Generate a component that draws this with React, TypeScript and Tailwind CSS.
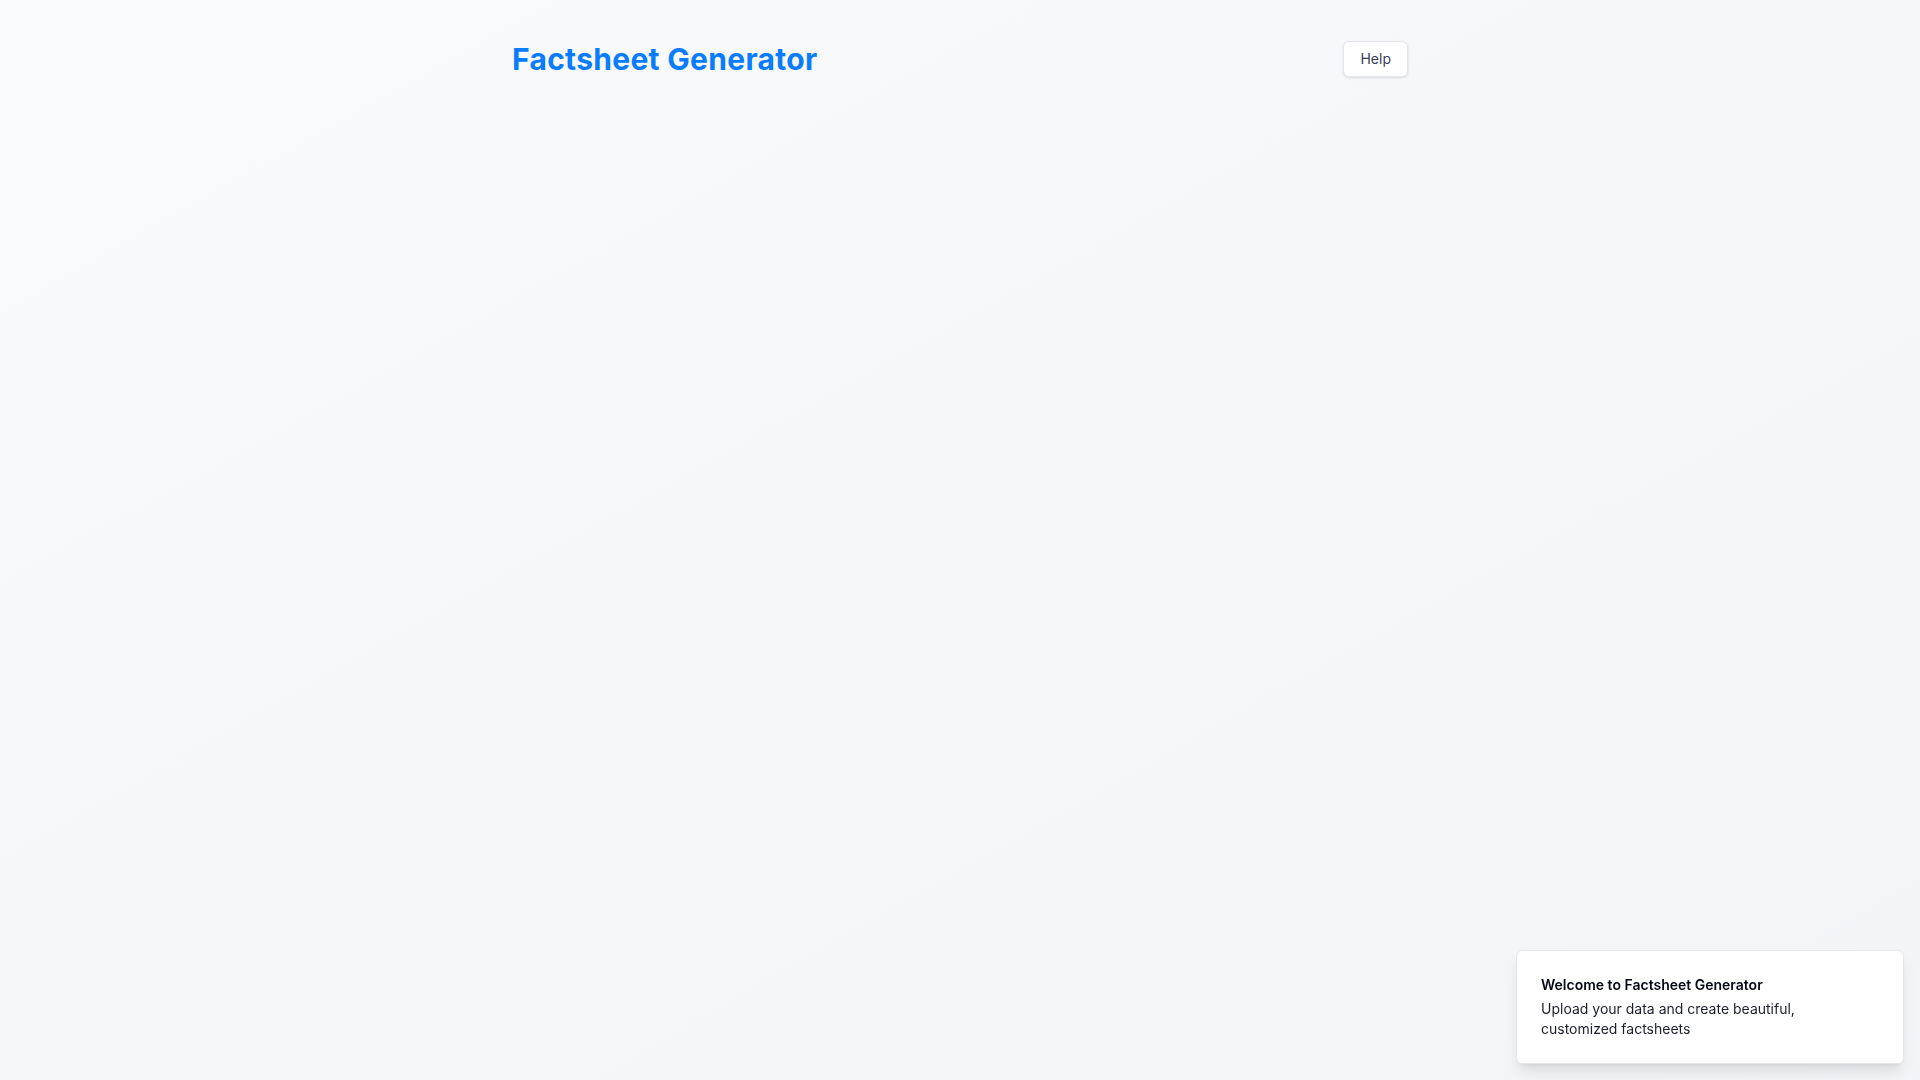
import { useState } from 'react'

function Toast({ title, description }: { title: string; description: string }) {
  return (
    <div className="fixed bottom-0 right-0 z-50 flex w-full max-w-[420px] flex-col p-4">
      <div className="relative flex w-full items-center justify-between space-x-4 overflow-hidden rounded-md border border-gray-200 bg-white p-6 pr-8 shadow-lg">
        <div className="grid gap-1">
          <div className="text-sm font-semibold text-gray-950">{title}</div>
          <div className="text-sm text-gray-950/90">{description}</div>
        </div>
      </div>
    </div>
  )
}

export default function App() {
  const [showToast] = useState(true)

  return (
    <div
      className="min-h-screen bg-gradient-to-br from-slate-50 to-gray-100"
      style={{ fontFamily: 'Inter, "Noto Sans", sans-serif' }}
    >
      <div className="mx-auto max-w-4xl pt-[41px]">
        <header className="flex items-center justify-between">
          <h1 className="text-3xl font-bold tracking-[0.01em] text-[#0a7cff]">Factsheet Generator</h1>
          <button className="h-9 rounded-md border border-gray-200 bg-white px-4 text-sm text-gray-700 shadow-sm">
            Help
          </button>
        </header>
      </div>

      {showToast && (
        <Toast
          title="Welcome to Factsheet Generator"
          description="Upload your data and create beautiful, customized factsheets"
        />
      )}
    </div>
  )
}
